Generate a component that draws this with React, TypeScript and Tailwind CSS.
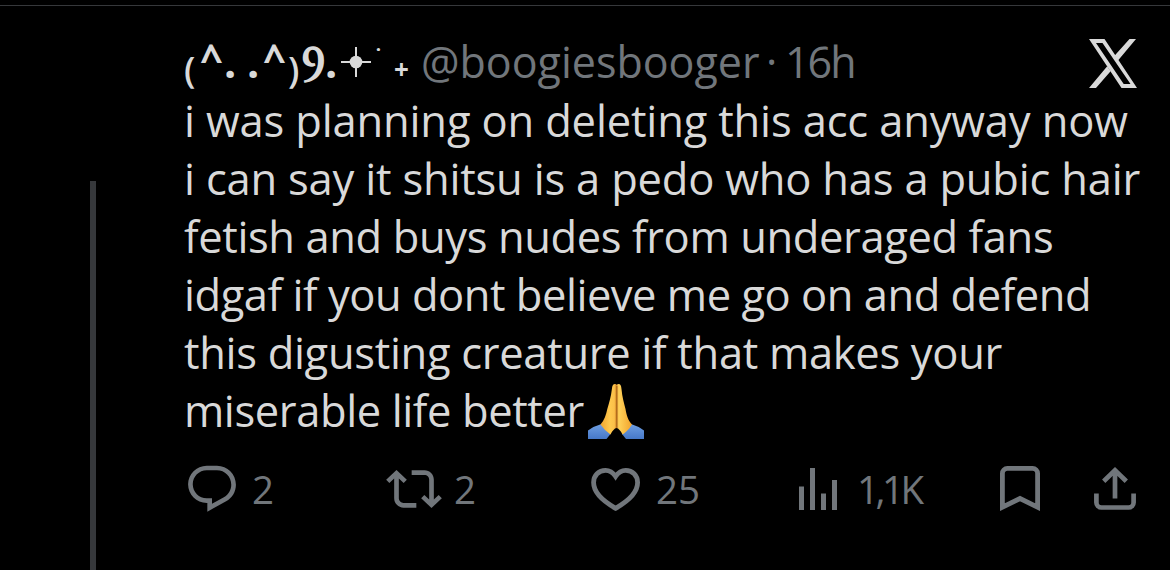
import type { ReactNode } from 'react';

const LINES = [
  { text: 'i was planning on deleting this acc anyway now', spacing: 'tracking-[-0.16px]' },
  { text: 'i can say it shitsu is a pedo who has a pubic hair', spacing: 'tracking-[-0.2px]' },
  { text: 'fetish and buys nudes from underaged fans', spacing: 'tracking-[-0.39px]' },
  { text: 'idgaf if you dont believe me go on and defend', spacing: 'tracking-[-0.48px]' },
  { text: 'this digusting creature if that makes your', spacing: 'tracking-[-0.31px]' },
  { text: 'miserable life better', spacing: 'tracking-[-0.4px]', emoji: true },
];

function XLogo() {
  return (
    <svg viewBox="0 0 48 49" className="mt-[33px] h-[49px] w-[48px] shrink-0" fill="#d9d9d9" fillRule="evenodd">
      <path d="M0 0h15.5L48 49H32.5zM7 4l27.700 41H41.500L13.500 4z" />
      <path d="M40.500 0H47L28.800 21.800l-3.300-5zM18.200 27.200l3.400 5L7 49H0z" />
    </svg>
  );
}

function PrayEmoji() {
  return (
    <svg viewBox="0 0 58 56" className="mt-[2px] ml-[4px] h-[56px] w-[58px] shrink-0">
      <defs>
        <linearGradient id="skin" x1="0" x2="1" y1="0" y2="0">
          <stop offset="0" stopColor="#f0a530" />
          <stop offset="0.3" stopColor="#ffc94e" />
          <stop offset="0.44" stopColor="#fbc04a" />
          <stop offset="0.5" stopColor="#d98a26" />
          <stop offset="0.58" stopColor="#ffd25a" />
          <stop offset="1" stopColor="#f2a32c" />
        </linearGradient>
        <linearGradient id="sleeve" x1="0" x2="0" y1="0" y2="1">
          <stop offset="0" stopColor="#6f9fe2" />
          <stop offset="1" stopColor="#4678c8" />
        </linearGradient>
      </defs>
      <path d="M0 46.500Q6 42 13.500 40L22.500 50L18.500 55H0z" fill="url(#sleeve)" />
      <path d="M56 46.500Q50 42 43 40L34 50L38 55H56z" fill="url(#sleeve)" />
      <path
        d="M27 0C25 0 24.200 1.500 23.900 5C23 13 21 19 19.300 25C18 31 16.500 36 12.500 40.500Q17 47 22.500 50.500Q25.500 44.500 28.500 44Q31.500 44.500 34.500 50.500Q40 47 44 40.500C39.800 36 38.500 31 37.500 25C36 19 34.200 13 33.500 5C33.200 1.500 32.500 0 30.600 0Q29 .2 28.800 1Q28.600 .2 27 0z"
        fill="url(#skin)"
      />
      <path d="M28.800 2V44" stroke="#a9651b" strokeWidth="1.200" />
    </svg>
  );
}

function ReplyIcon() {
  return (
    <svg viewBox="0 0 24 24" className="h-[56px] w-[56px]" fill="currentColor">
      <path d="M1.751 10c0-4.420 3.584-8 8.005-8h4.366c4.490 0 8.129 3.640 8.129 8.130 0 2.960-1.607 5.680-4.196 7.110l-8.054 4.460v-3.690h-.067c-4.490.1-8.183-3.510-8.183-8.010zm8.005-6c-3.317 0-6.005 2.690-6.005 6 0 3.370 2.770 6.080 6.138 6.010l.351-.01h1.761v2.300l5.087-2.810c1.951-1.080 3.163-3.130 3.163-5.360 0-3.390-2.744-6.130-6.129-6.130H9.756z" />
    </svg>
  );
}

function RepostIcon() {
  return (
    <svg viewBox="0 0 24 24" className="h-[56px] w-[56px]" fill="currentColor">
      <path d="M4.500 3.880l4.432 4.140-1.364 1.460L5.500 7.550V16c0 1.100.896 2 2 2H13v2H7.500c-2.209 0-4-1.790-4-4V7.550L1.432 9.480.068 8.020 4.500 3.880zM16.500 6H11V4h5.500c2.209 0 4 1.790 4 4v8.450l2.068-1.930 1.364 1.460-4.432 4.140-4.432-4.140 1.364-1.460 2.068 1.930V8c0-1.100-.896-2-2-2z" />
    </svg>
  );
}

function HeartIcon() {
  return (
    <svg viewBox="0 0 50 46" className="mt-[6px] h-[46px] w-[50px]" fill="none" stroke="currentColor" strokeWidth="4.800">
      <path d="M24.600 9.500C21.800 5.400 18 3.400 14.500 3.400C7.800 3.400 2.600 8.400 2.600 15.600C2.600 26 13 34.800 24.600 41.300C36.200 34.800 46.600 26 46.600 15.600C46.600 8.400 41.400 3.400 34.700 3.400C31.200 3.400 27.400 5.400 24.600 9.500z" />
    </svg>
  );
}

function ViewsIcon() {
  return (
    <svg viewBox="0 0 38 42" className="mt-[7px] h-[42px] w-[38px]" fill="currentColor">
      <path d="M0 18.500h5V42H0zM11 0h5v42h-5zM22 25.500h5V42h-5zM33 12h5v30h-5z" />
    </svg>
  );
}

function BookmarkIcon() {
  return (
    <svg viewBox="0 0 40 46" className="mt-[4px] h-[46px] w-[40px]" fill="none" stroke="currentColor" strokeWidth="4.800">
      <path d="M2.400 42.200V8.400a5 5 0 0 1 5-5h25.200a5 5 0 0 1 5 5v33.800L20 33.500z" />
    </svg>
  );
}

function ShareIcon() {
  return (
    <svg viewBox="0 0 42 45" className="mt-[5px] h-[45px] w-[42px]" fill="none" stroke="currentColor" strokeWidth="4.700">
      <path d="M2.400 27.500V36.500a5 5 0 0 0 5 5h27.200a5 5 0 0 0 5-5V27.500M21 32.500V4.500M9.700 15.300L21 4.200L32.300 15.300" />
    </svg>
  );
}

function Action({ icon, count, className }: { icon: ReactNode; count?: ReactNode; className: string }) {
  return (
    <div className={`flex h-[56px] shrink-0 items-start ${className}`}>
      {icon}
      {count && <span className="text-[38.500px] leading-[56px]">{count}</span>}
    </div>
  );
}

export default function App() {
  return (
    <div className="h-[570px] w-[1170px] overflow-hidden bg-black pt-[5px] font-['Open_Sans','DejaVu_Sans',sans-serif] text-[#d9d9d9]">
      <div className="h-px bg-[#36383b]" />
      <div className="flex h-[564px]">
        <div className="flex w-[184px] shrink-0 pt-[175px] pl-[90px]">
          <div className="h-full w-[6px] bg-[#36383b]" />
        </div>

        <div className="w-[986px]">
          <div className="flex h-[86px] items-start pr-[33px] text-[43px] leading-[58px] whitespace-pre">
            <div className="flex h-[85px] w-[237px] shrink-0 pt-[27px] font-bold">
              <span className="mt-[8px] w-[16px] text-[36px] leading-[58px] font-semibold">(</span>
              <span className="w-[24px] text-[40px] leading-[50px]">^</span>
              <span className="w-[23px]">.</span>
              <span className="w-[16px]">.</span>
              <span className="w-[25px] text-[40px] leading-[50px]">^</span>
              <span className="mt-[8px] w-[14px] text-[36px] leading-[58px] font-semibold">)</span>
              <span className="w-[23px] text-[46px] leading-[57px]">Ⳋ</span>
              <span className="w-[16px]">.</span>
              <svg viewBox="0 0 30 30" className="mt-[14px] h-[30px] w-[30px] shrink-0" fill="currentColor">
                <circle cx="15" cy="15" r="6.300" />
                <path d="M14 0h2v30h-2zM0 14h30v2H0z" />
              </svg>
              <span className="w-[23px] pl-[5px] text-[20px] leading-[46px]">˙</span>
              <span className="text-[26px] leading-[73px]">+</span>
            </div>
            <div className="flex pt-[27px] text-[#71767b]">
              <span className="w-[345px]">@boogiesbooger</span>
              <span className="w-[19px]">·</span>
              <span className="tracking-[-2px]">16h</span>
            </div>
            <div className="ml-auto">
              <XLogo />
            </div>
          </div>

          <div className="text-[43.500px] leading-[58px] whitespace-nowrap">
            {LINES.map((line) => (
              <div key={line.text} className="flex h-[58px] items-center">
                <span className={line.spacing}>{line.text}</span>
                {line.emoji && <PrayEmoji />}
              </div>
            ))}
          </div>

          <div className="mt-[21px] flex text-[#71767b]">
            <Action icon={<ReplyIcon />} count="2" className="w-[202px] gap-[12px]" />
            <Action icon={<RepostIcon />} count="2" className="w-[205px] gap-[12px]" />
            <Action icon={<HeartIcon />} count="25" className="w-[208px] gap-[15px]" />
            <Action
              icon={<ViewsIcon />}
              count={<span className="tracking-[-3.500px]">1,1K</span>}
              className="w-[201px] gap-[20px]"
            />
            <Action icon={<BookmarkIcon />} className="w-[94px]" />
            <Action icon={<ShareIcon />} className="w-[42px]" />
          </div>
        </div>
      </div>
    </div>
  );
}
